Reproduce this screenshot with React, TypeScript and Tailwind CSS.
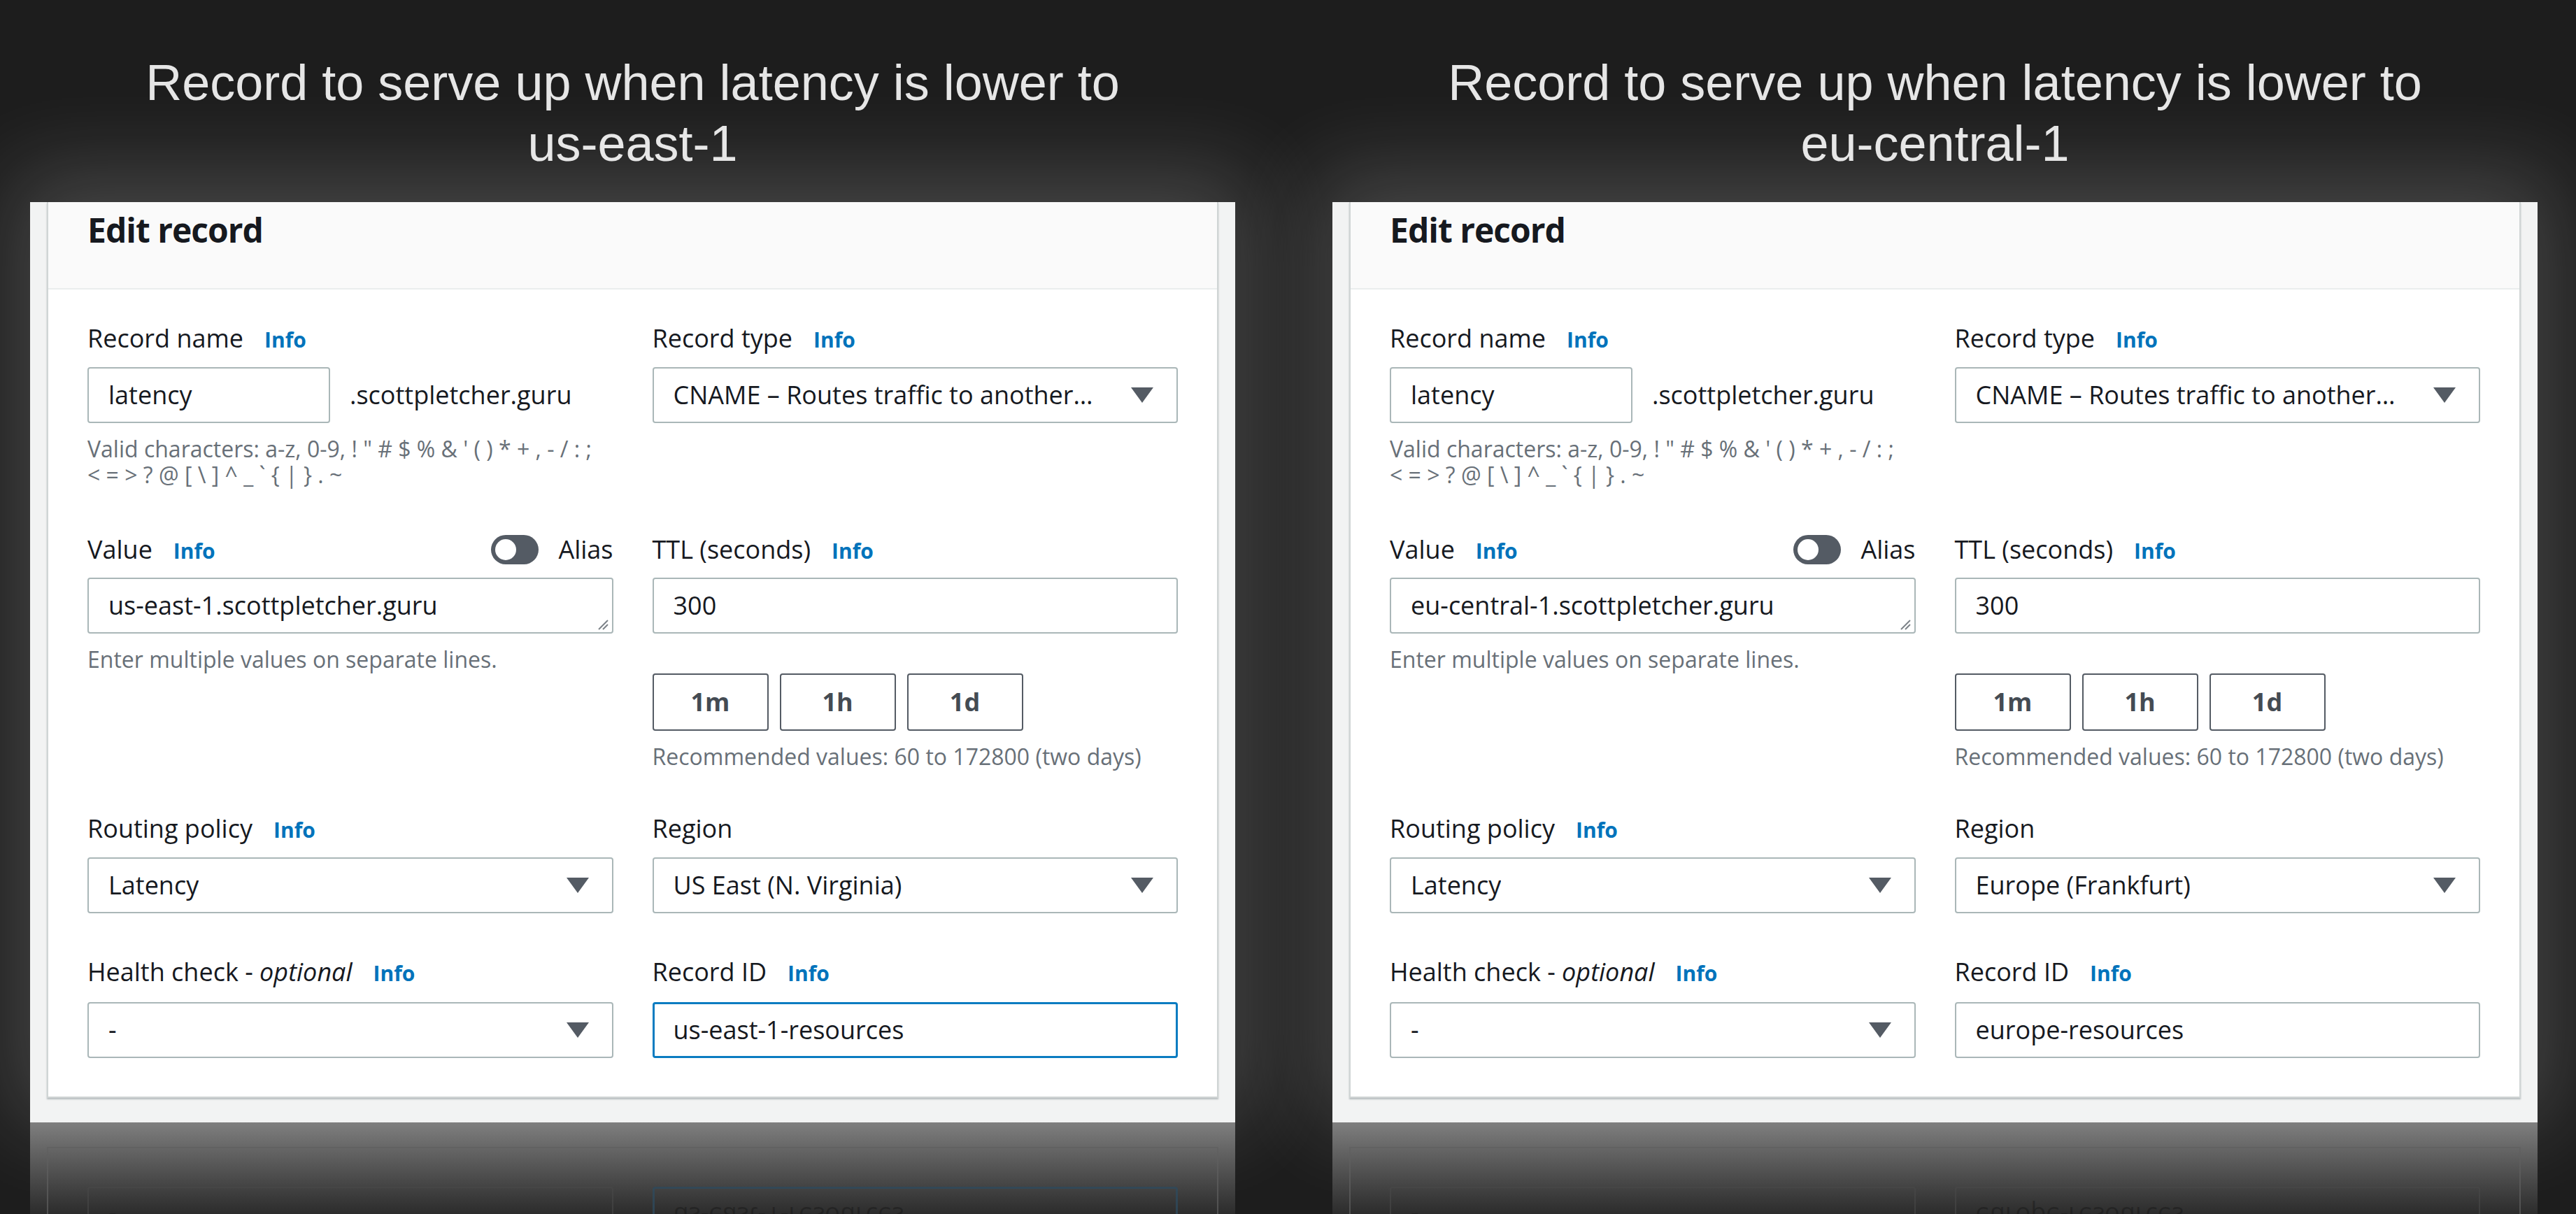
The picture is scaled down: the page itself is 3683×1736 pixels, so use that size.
import React from "react";

type PanelData = {
    region: string;
    value: string;
    regionName: string;
    recordId: string;
    focused: boolean;
};

const panels: PanelData[] = [
    {
        region: "us-east-1",
        value: "us-east-1.scottpletcher.guru",
        regionName: "US East (N. Virginia)",
        recordId: "us-east-1-resources",
        focused: true,
    },
    {
        region: "eu-central-1",
        value: "eu-central-1.scottpletcher.guru",
        regionName: "Europe (Frankfurt)",
        recordId: "europe-resources",
        focused: false,
    },
];

function Info() {
    return <span className="text-[30px] font-bold text-[#0073bb]">Info</span>;
}

function Label({ children, info = true }: { children: React.ReactNode; info?: boolean }) {
    return (
        <div className="flex items-baseline gap-[30px] h-[44px] leading-[44px] text-[36px] text-[#16191f]">
            <span>{children}</span>
            {info && <Info />}
        </div>
    );
}

function Caret() {
    return (
        <svg width="32" height="22" viewBox="0 0 32 22" className="shrink-0">
            <path d="M0 0H32L16 22Z" fill="#545b64" />
        </svg>
    );
}

function Select({ text }: { text: string }) {
    return (
        <div className="h-[80px] border-2 border-[#aab7b8] rounded-[4px] bg-white flex items-center justify-between pl-[28px] pr-[33px] gap-[20px] text-[36px] text-[#16191f]">
            <span className="truncate">{text}</span>
            <Caret />
        </div>
    );
}

function Input({ text, focused = false }: { text: string; focused?: boolean }) {
    return (
        <div
            className={
                focused
                    ? "h-[80px] border-[3px] border-[#0a7cc1] rounded-[4px] bg-white flex items-center px-[27px] text-[36px] text-[#16191f]"
                    : "h-[80px] border-2 border-[#aab7b8] rounded-[4px] bg-white flex items-center px-[28px] text-[36px] text-[#16191f]"
            }
        >
            {text}
        </div>
    );
}

function Helper({ children }: { children: React.ReactNode }) {
    return <div className="text-[32px] leading-[37px] text-[#687078]">{children}</div>;
}

function Panel({ p }: { p: PanelData }) {
    return (
        <div className="w-[1723px] shrink-0 flex flex-col">
            {/* heading over the video frame */}
            <div className="h-[289px] pt-[75px] text-center text-[72px] leading-[87px] text-[#e6e6e6] font-['Liberation_Sans',Arial,sans-serif]">
                Record to serve up when latency is lower to
                <br />
                {p.region}
            </div>

            <div className="bg-[#f2f3f3] px-[24px] pb-[35px] shadow-[0_-20px_120px_25px_rgba(255,255,255,0.18)] font-['Open_Sans','Noto_Sans',sans-serif]">
                <div className="bg-white border-x-2 border-b-2 border-[#d0d5d5] shadow-[0_2px_2px_rgba(0,28,36,0.25)]">
                    <div className="h-[125px] bg-[#fafafa] border-b-2 border-[#eaeded] pl-[56px] pt-[12px]">
                        <div className="text-[48px] leading-[56px] font-bold tracking-[-1px] text-[#16191f]">Edit record</div>
                    </div>

                    <div className="px-[56px] pt-[48px] pb-[55px]">
                        {/* record name / type */}
                        <div className="grid grid-cols-2 gap-x-[56px]">
                            <div>
                                <Label>Record name</Label>
                                <div className="mt-[19px] flex items-center gap-[28px]">
                                    <div className="w-[347px]">
                                        <Input text="latency" />
                                    </div>
                                    <span className="text-[36px] text-[#16191f]">.scottpletcher.guru</span>
                                </div>
                                <div className="mt-[18px]">
                                    <Helper>
                                        Valid characters: a-z, 0-9, ! " # $ % &amp; ' ( ) * + , - / : ;
                                        <br />
                                        &lt; = &gt; ? @ [ \ ] ^ _ ` {"{"} | {"}"} . ~
                                    </Helper>
                                </div>
                            </div>
                            <div>
                                <Label>Record type</Label>
                                <div className="mt-[19px]">
                                    <Select text="CNAME – Routes traffic to another…" />
                                </div>
                            </div>
                        </div>

                        {/* value / ttl */}
                        <div className="grid grid-cols-2 gap-x-[56px] mt-[67px]">
                            <div>
                                <div className="flex items-center justify-between">
                                    <Label>Value</Label>
                                    <div className="flex items-center gap-[28px]">
                                        <div className="w-[68px] h-[42px] rounded-full bg-[#545b64] p-[6px]">
                                            <div className="w-[30px] h-[30px] rounded-full bg-white" />
                                        </div>
                                        <span className="text-[36px] leading-[44px] text-[#16191f]">Alias</span>
                                    </div>
                                </div>
                                <div className="mt-[18px] relative">
                                    <Input text={p.value} />
                                    <svg width="18" height="16" viewBox="0 0 18 16" className="absolute right-[6px] bottom-[5px]">
                                        <path d="M16 2L3 15M16 8L9 15" stroke="#7d8389" strokeWidth="2" />
                                    </svg>
                                </div>
                                <div className="mt-[18px]">
                                    <Helper>Enter multiple values on separate lines.</Helper>
                                </div>
                            </div>
                            <div>
                                <Label>TTL (seconds)</Label>
                                <div className="mt-[18px]">
                                    <Input text="300" />
                                </div>
                                <div className="mt-[57px] flex gap-[16px]">
                                    {["1m", "1h", "1d"].map((b) => (
                                        <div
                                            key={b}
                                            className="w-[166px] h-[82px] border-2 border-[#545b64] rounded-[4px] flex items-center justify-center text-[36px] font-bold text-[#444b53]"
                                        >
                                            {b}
                                        </div>
                                    ))}
                                </div>
                                <div className="mt-[18px]">
                                    <Helper>Recommended values: 60 to 172800 (two days)</Helper>
                                </div>
                            </div>
                        </div>

                        {/* routing / region */}
                        <div className="grid grid-cols-2 gap-x-[56px] mt-[63px]">
                            <div>
                                <Label>Routing policy</Label>
                                <div className="mt-[19px]">
                                    <Select text="Latency" />
                                </div>
                            </div>
                            <div>
                                <Label info={false}>Region</Label>
                                <div className="mt-[19px]">
                                    <Select text={p.regionName} />
                                </div>
                            </div>
                        </div>

                        {/* health check / record id */}
                        <div className="grid grid-cols-2 gap-x-[56px] mt-[62px]">
                            <div>
                                <Label>
                                    Health check - <i>optional</i>
                                </Label>
                                <div className="mt-[21px]">
                                    <Select text="-" />
                                </div>
                            </div>
                            <div>
                                <Label>Record ID</Label>
                                <div className="mt-[21px]">
                                    <Input text={p.recordId} focused={p.focused} />
                                </div>
                            </div>
                        </div>
                    </div>
                </div>
            </div>

            {/* mirrored reflection under the frame */}
            <div className="h-[131px] overflow-hidden bg-linear-to-b from-[#7f7f7f] via-[#545454] to-[#2c2c2c] px-[24px] pt-[35px] font-['Open_Sans','Noto_Sans',sans-serif]">
                <div className="h-[200px] border-x-2 border-t-2 border-[#5f5f5f]/70 px-[56px] pt-[55px] grid grid-cols-2 gap-x-[56px] items-start">
                    <div className="h-[80px] border-2 border-[#4a4a4a]/60 rounded-[4px] px-[28px] pt-[18px]">
                        <span className="inline-block -scale-y-100 text-[36px] leading-[44px] text-black/20">-</span>
                    </div>
                    <div
                        className={
                            p.focused
                                ? "h-[80px] border-[3px] border-[#2e4a5c]/80 rounded-[4px] px-[27px] pt-[17px]"
                                : "h-[80px] border-2 border-[#4a4a4a]/60 rounded-[4px] px-[28px] pt-[18px]"
                        }
                    >
                        <span className="inline-block -scale-y-100 text-[36px] leading-[44px] text-black/25">{p.recordId}</span>
                    </div>
                </div>
            </div>
        </div>
    );
}

export default function App() {
    return (
        <div className="w-[3683px] h-[1736px] overflow-hidden bg-[#1d1d1d] flex pl-[43px] gap-[139px]">
            {panels.map((p) => (
                <Panel key={p.region} p={p} />
            ))}
        </div>
    );
}
